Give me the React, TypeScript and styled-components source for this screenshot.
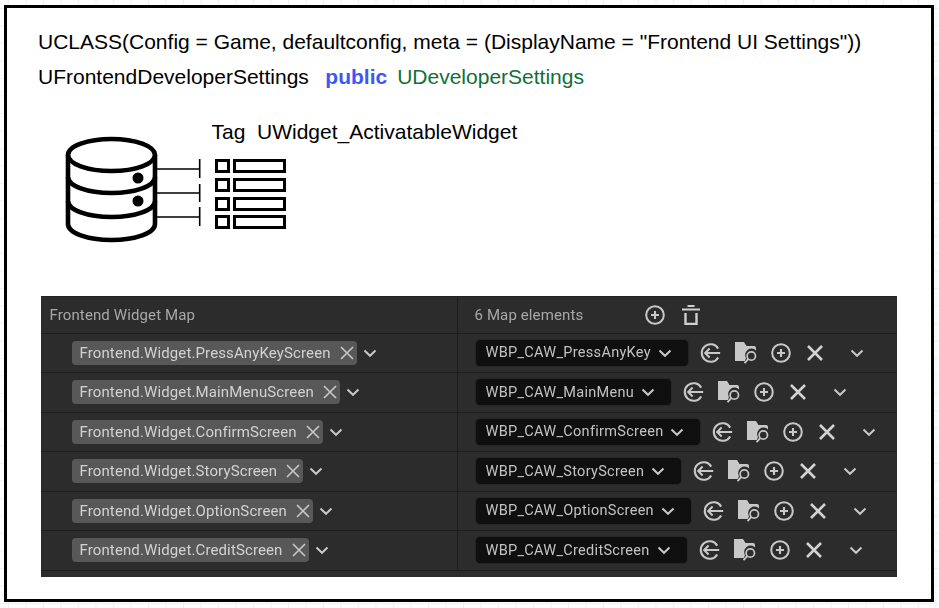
import React from "react";
import styled, { createGlobalStyle } from "styled-components";

const Global = createGlobalStyle`
  html, body { margin: 0; padding: 0; width: 939px; height: 608px; overflow: hidden; background-color: #fff; }
  body {
    background-image:
      linear-gradient(to right, #f0f0f0 1px, transparent 1px),
      linear-gradient(to bottom, #f0f0f0 1px, transparent 1px);
    background-size: 17.5px 17.5px;
    background-position: 8px 8px;
  }
`;

const Page = styled.div`
  box-sizing: border-box;
  width: 939px;
  height: 608px;
  padding: 5px 5px 6px 3.5px;
`;

const Frame = styled.main`
  box-sizing: border-box;
  width: 100%;
  height: 100%;
  border: 3.5px solid #000;
  background: #fff;
  padding: 16px 0 0 31.5px;
  font-family: "Liberation Sans", Arial, sans-serif;
  color: #000;
`;

const CodeLine = styled.div`
  font-size: 21px;
  line-height: 35px;
  white-space: pre;
  display: flex;
  align-items: baseline;
`;

const Keyword = styled.span`
  color: #3d57f5;
  font-weight: 700;
  margin-left: 16.5px;
`;

const TypeName = styled.span`
  color: #0f7038;
  margin-left: 10px;
`;

const Diagram = styled.section`
  position: relative;
  margin-top: 14px;
  height: 187.5px;
`;

const DiagramLabel = styled.div`
  position: absolute;
  left: 173.5px;
  top: 9.5px;
  font-size: 21px;
  line-height: 28px;
  white-space: pre;
`;

const DiagramArt = styled.svg`
  position: absolute;
  left: 25.5px;
  top: 26.5px;
  display: block;
`;

const Panel = styled.section`
  width: 856px;
  margin-left: 2.5px;
  background: #2c2c2c;
  font-family: Roboto, "Noto Sans", sans-serif;
  font-size: 15px;
  letter-spacing: 0.12px;
  color: #c4c4c4;
  padding-bottom: 6px;
  filter: blur(0.5px);
`;

const Row = styled.div<{ $header?: boolean }>`
  display: grid;
  grid-template-columns: 417px 1fr;
  box-sizing: border-box;
  height: ${(p) => (p.$header ? "38px" : "39.5px")};
  border-bottom: 1.5px solid #1e1e1e;
  border-top: ${(p) => (p.$header ? "1px solid #222" : "none")};
`;

const Cell = styled.div<{ $start: number; $divider?: boolean }>`
  display: flex;
  align-items: center;
  min-width: 0;
  padding-left: ${(p) => p.$start}px;
  border-right: ${(p) => (p.$divider ? "1.5px solid #1e1e1e" : "none")};
`;

const HeaderText = styled.span`
  color: #a8a8a8;
`;

const HeaderIcons = styled.div`
  display: flex;
  align-items: center;
  gap: 17px;
  margin-left: 62px;
`;

const Tag = styled.div`
  display: flex;
  align-items: center;
  height: 24px;
  padding: 0 2px 0 8px;
  background: #585858;
  border-radius: 4px;
  color: #d2d2d2;
  white-space: nowrap;
`;

const TagClose = styled.svg`
  margin-left: 8px;
  display: block;
`;

const TagChevron = styled.span`
  display: flex;
  margin-left: 6px;
`;

const Select = styled.div`
  display: flex;
  align-items: center;
  box-sizing: border-box;
  height: 28px;
  padding: 0 16px 0 10px;
  background: #0f0f0f;
  border: 1px solid #262626;
  border-radius: 5px;
  white-space: nowrap;
  color: #c2c2c2;
  font-size: 14.5px;
  letter-spacing: 0.3px;
`;

const SelectChevron = styled.span`
  display: flex;
  margin-left: 7px;
`;

const ActionRow = styled.div`
  display: flex;
  align-items: center;
  margin-left: 11px;
  gap: 14px;
`;

const CrossSlot = styled.span`
  display: flex;
  margin-left: 1px;
`;

const TrailingChevron = styled.span`
  display: flex;
  margin-left: 26px;
`;

const Chevron = ({ color = "#c8c8c8", size = 14 }: { color?: string; size?: number }) => (
  <svg width={size} height={size} viewBox="0 0 14 14" fill="none" style={{ display: "block", flex: "none" }}>
    <path d="M1.5 4.5 7 9.8l5.5-5.3" stroke={color} strokeWidth="2" />
  </svg>
);

const BackIcon = () => (
  <svg width="21" height="20" viewBox="0 0 21 20" fill="none">
    <path d="M18.2 5.6A8.8 8.8 0 1 0 18.2 14.4" stroke="#c8c8c8" strokeWidth="2.1" />
    <path d="M9.6 5.6 5.2 10l4.4 4.4M5.2 10h15" stroke="#c8c8c8" strokeWidth="2.1" />
  </svg>
);

const FolderIcon = () => (
  <svg width="22" height="22" viewBox="0 0 22 22" fill="none">
    <path d="M0 0h9l2.5 4H19a2 2 0 0 1 2 2v2.4a6.4 6.4 0 0 0-10 7.8L9.8 19H0z" fill="#c8c8c8" />
    <circle cx="16.3" cy="14" r="4.2" stroke="#c8c8c8" strokeWidth="1.7" />
    <path d="M13.2 17.2 9.5 21.2" stroke="#c8c8c8" strokeWidth="1.9" />
  </svg>
);

const PlusCircle = ({ color = "#c8c8c8" }: { color?: string }) => (
  <svg width="20" height="20" viewBox="0 0 20 20" fill="none">
    <circle cx="10" cy="10" r="8.8" stroke={color} strokeWidth="2" />
    <path d="M10 6v8M6 10h8" stroke={color} strokeWidth="2.1" />
  </svg>
);

const CrossIcon = () => (
  <svg width="18" height="18" viewBox="0 0 18 18" fill="none">
    <path d="M2 2l14 14M16 2 2 16" stroke="#d2d2d2" strokeWidth="2.6" />
  </svg>
);

const TrashIcon = () => (
  <svg width="18" height="20" viewBox="0 0 18 20" fill="none">
    <path d="M0 4.5h18M5.5 1h7" stroke="#cfcfcf" strokeWidth="2.2" />
    <path d="M3.5 8v11h11V8" stroke="#cfcfcf" strokeWidth="2.4" />
  </svg>
);

const rows = [
  { tag: "PressAnyKeyScreen", asset: "WBP_CAW_PressAnyKey" },
  { tag: "MainMenuScreen", asset: "WBP_CAW_MainMenu" },
  { tag: "ConfirmScreen", asset: "WBP_CAW_ConfirmScreen" },
  { tag: "StoryScreen", asset: "WBP_CAW_StoryScreen" },
  { tag: "OptionScreen", asset: "WBP_CAW_OptionScreen" },
  { tag: "CreditScreen", asset: "WBP_CAW_CreditScreen" },
];

const Database = () => (
  <DiagramArt width="230" height="112" viewBox="0 0 230 112" fill="none">
    <g stroke="#000" strokeWidth="4.6">
      <ellipse cx="47.5" cy="20" rx="43.5" ry="16" />
      <path d="M4 20v69c0 9 19.5 16 43.5 16S91 98 91 89V20" />
      <path d="M4 42c0 9 19.5 16 43.5 16S91 51 91 42" />
      <path d="M4 66c0 9 19.5 16 43.5 16S91 75 91 66" />
    </g>
    <circle cx="74" cy="43" r="5.5" fill="#000" />
    <circle cx="74" cy="66" r="5.5" fill="#000" />
    <g stroke="#000" strokeWidth="1.6">
      <path d="M93 34h42M93 58h42M93 82h42" />
      <path d="M135.7 24v19M135.7 49v18M135.7 72v19" />
    </g>
    <g stroke="#000" strokeWidth="3" fill="#fff">
      <rect x="152.5" y="25.5" width="12" height="11" />
      <rect x="170.5" y="25.5" width="50" height="11" />
      <rect x="152.5" y="44.5" width="12" height="11" />
      <rect x="170.5" y="44.5" width="50" height="11" />
      <rect x="152.5" y="63.5" width="12" height="11" />
      <rect x="170.5" y="63.5" width="50" height="11" />
      <rect x="152.5" y="81.5" width="12" height="11" />
      <rect x="170.5" y="81.5" width="50" height="11" />
    </g>
  </DiagramArt>
);

export default function App() {
  return (
    <>
      <Global />
      <Page>
        <Frame>
          <CodeLine>UCLASS(Config = Game, defaultconfig, meta = (DisplayName = "Frontend UI Settings"))</CodeLine>
          <CodeLine>
            UFrontendDeveloperSettings
            <Keyword>public</Keyword>
            <TypeName>UDeveloperSettings</TypeName>
          </CodeLine>
          <Diagram>
            <Database />
            <DiagramLabel>Tag  UWidget_ActivatableWidget</DiagramLabel>
          </Diagram>
          <Panel>
            <Row $header>
              <Cell $start={9} $divider>
                <HeaderText>Frontend Widget Map</HeaderText>
              </Cell>
              <Cell $start={17}>
                <HeaderText>6 Map elements</HeaderText>
                <HeaderIcons>
                  <PlusCircle />
                  <TrashIcon />
                </HeaderIcons>
              </Cell>
            </Row>
            {rows.map((r) => (
              <Row key={r.tag}>
                <Cell $start={31} $divider>
                  <Tag>
                    Frontend.Widget.{r.tag}
                    <TagClose width="16" height="16" viewBox="0 0 16 16" fill="none">
                      <path d="M2 2l12 12M14 2 2 14" stroke="#c8c8c8" strokeWidth="1.6" />
                    </TagClose>
                  </Tag>
                  <TagChevron>
                    <Chevron />
                  </TagChevron>
                </Cell>
                <Cell $start={17}>
                  <Select>
                    {r.asset}
                    <SelectChevron>
                      <Chevron />
                    </SelectChevron>
                  </Select>
                  <ActionRow>
                    <BackIcon />
                    <FolderIcon />
                    <PlusCircle />
                    <CrossSlot>
                      <CrossIcon />
                    </CrossSlot>
                  </ActionRow>
                  <TrailingChevron>
                    <Chevron />
                  </TrailingChevron>
                </Cell>
              </Row>
            ))}
          </Panel>
        </Frame>
      </Page>
    </>
  );
}
